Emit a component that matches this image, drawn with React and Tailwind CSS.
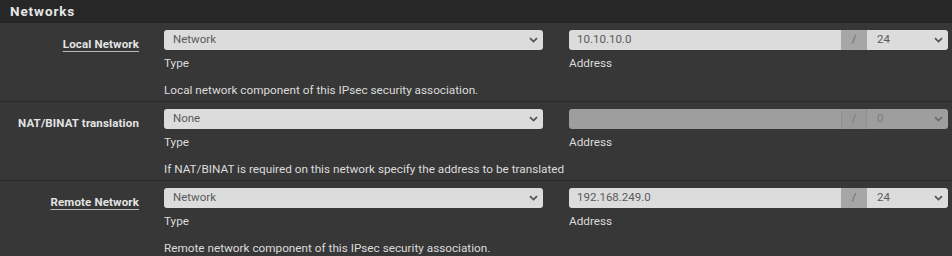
import React from 'react';

const Chevron = ({ className = '' }) => (
  <svg className={className} width="9" height="6" viewBox="0 0 9 6" fill="none">
    <path d="M1 1.2 4.5 4.6 8 1.2" stroke="currentColor" strokeWidth="1.8" />
  </svg>
);

const SelectBox = ({ value, disabled }) => (
  <div
    className={`h-[20px] w-full rounded-[3px] flex items-center justify-between pl-[9px] pr-[5px] ${
      disabled ? 'bg-[#9e9e9e] text-[#7c7c7c]' : 'bg-[#dcdcdc] text-[#5a5a5a]'
    }`}
  >
    <span className="text-[11.5px] leading-none">{value}</span>
    <Chevron className={disabled ? 'text-[#6e6e6e]' : 'text-[#555]'} />
  </div>
);

const AddressBox = ({ address, mask, disabled }) => (
  <div
    className={`h-[20px] w-full rounded-[3px] flex overflow-hidden ${
      disabled ? 'bg-[#9e9e9e] text-[#7c7c7c]' : 'bg-[#dcdcdc] text-[#5a5a5a]'
    }`}
  >
    <div className="flex-1 flex items-center pl-[8px] text-[11.5px] leading-none">{address}</div>
    <div
      className={`w-[26px] flex items-center justify-center text-[11px] ${
        disabled
          ? 'bg-[#9a9a9a] border-x border-[#8f8f8f] text-[#777]'
          : 'bg-[#a6a6a6] text-[#6a6a6a]'
      }`}
    >
      /
    </div>
    <div className="w-[81px] flex items-center justify-between pl-[10px] pr-[5px] text-[11.5px] leading-none">
      <span>{mask}</span>
      <Chevron className={disabled ? 'text-[#6e6e6e]' : 'text-[#555]'} />
    </div>
  </div>
);

const Row = ({ label, underline, type, address, mask, disabled, help, last }) => (
  <div className={`flex h-[79px] ${last ? '' : 'border-b border-[#2b2b2b]'}`}>
    <div className="w-[139px] pt-[8px] text-right">
      <span
        className={`text-[11.5px] tracking-[0.15px] font-bold text-[#e4e4e4] ${
          underline ? 'underline decoration-[#bbb] underline-offset-[3px]' : ''
        }`}
      >
        {label}
      </span>
    </div>
    <div className="ml-[25px] flex flex-col pt-[7px]">
      <div className="flex gap-[26px]">
        <div className="w-[379px]">
          <SelectBox value={type} />
          <div className="mt-[6px] text-[11.75px] leading-[14px] text-[#dcdcdc]">Type</div>
        </div>
        <div className="w-[379px]">
          <AddressBox address={address} mask={mask} disabled={disabled} />
          <div className="mt-[6px] text-[11.75px] leading-[14px] text-[#dcdcdc]">Address</div>
        </div>
      </div>
      <div className="mt-[13px] text-[11.75px] leading-[14px] text-[#dcdcdc]">{help}</div>
    </div>
  </div>
);

export default function App() {
  return (
    <div className="w-[952px] h-[256px] overflow-hidden bg-[#373737] font-['Roboto',sans-serif]">
      <div className="h-[23px] bg-[#272727] border-b border-[#222] flex items-center pl-[10px]">
        <span className="text-[13.5px] font-bold text-[#e6e6e6] tracking-[0.9px]">Networks</span>
      </div>
      <Row
        label="Local Network"
        underline
        type="Network"
        address="10.10.10.0"
        mask="24"
        help="Local network component of this IPsec security association."
      />
      <Row
        label="NAT/BINAT translation"
        type="None"
        address=""
        mask="0"
        disabled
        help="If NAT/BINAT is required on this network specify the address to be translated"
      />
      <Row
        label="Remote Network"
        underline
        type="Network"
        address="192.168.249.0"
        mask="24"
        help="Remote network component of this IPsec security association."
        last
      />
    </div>
  );
}
